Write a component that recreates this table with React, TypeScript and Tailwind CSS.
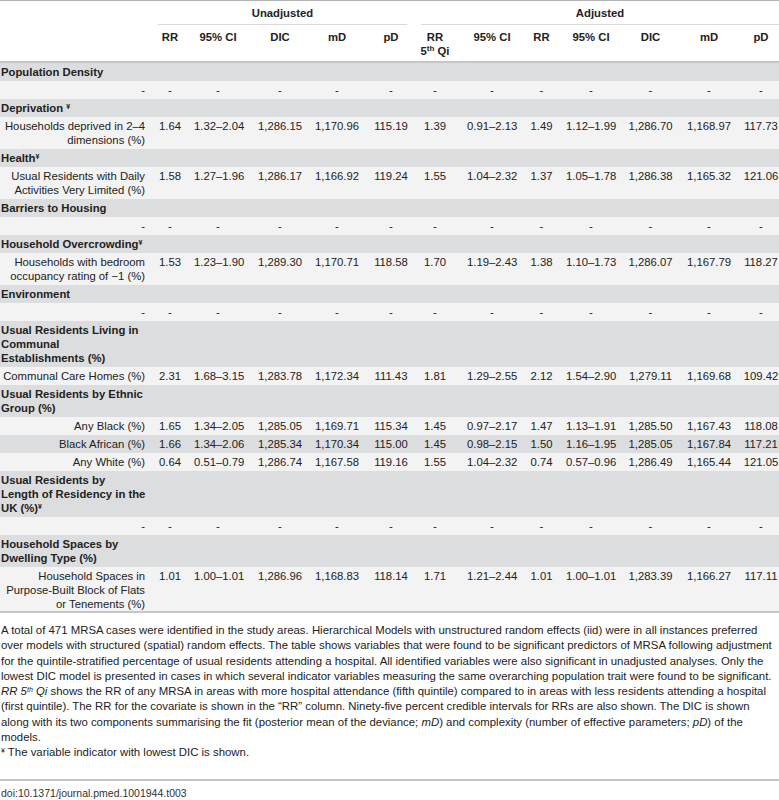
import React from 'react';

type Row =
  | { kind: 'group'; lines: React.ReactNode[] }
  | { kind: 'dash' }
  | { kind: 'data'; lines: string[]; values: string[] };

const rows: Row[] = [
  { kind: 'group', lines: ['Population Density'] },
  { kind: 'dash' },
  { kind: 'group', lines: [<>Deprivation <sup className="text-[7px]">¥</sup></>] },
  {
    kind: 'data',
    lines: ['Households deprived in 2–4', 'dimensions (%)'],
    values: ['1.64', '1.32–2.04', '1,286.15', '1,170.96', '115.19', '1.39', '0.91–2.13', '1.49', '1.12–1.99', '1,286.70', '1,168.97', '117.73'],
  },
  { kind: 'group', lines: [<>Health<sup className="text-[7px]">¥</sup></>] },
  {
    kind: 'data',
    lines: ['Usual Residents with Daily', 'Activities Very Limited (%)'],
    values: ['1.58', '1.27–1.96', '1,286.17', '1,166.92', '119.24', '1.55', '1.04–2.32', '1.37', '1.05–1.78', '1,286.38', '1,165.32', '121.06'],
  },
  { kind: 'group', lines: ['Barriers to Housing'] },
  { kind: 'dash' },
  { kind: 'group', lines: [<>Household Overcrowding<sup className="text-[7px]">¥</sup></>] },
  {
    kind: 'data',
    lines: ['Households with bedroom', 'occupancy rating of −1 (%)'],
    values: ['1.53', '1.23–1.90', '1,289.30', '1,170.71', '118.58', '1.70', '1.19–2.43', '1.38', '1.10–1.73', '1,286.07', '1,167.79', '118.27'],
  },
  { kind: 'group', lines: ['Environment'] },
  { kind: 'dash' },
  { kind: 'group', lines: ['Usual Residents Living in', 'Communal', 'Establishments (%)'] },
  {
    kind: 'data',
    lines: ['Communal Care Homes (%)'],
    values: ['2.31', '1.68–3.15', '1,283.78', '1,172.34', '111.43', '1.81', '1.29–2.55', '2.12', '1.54–2.90', '1,279.11', '1,169.68', '109.42'],
  },
  { kind: 'group', lines: ['Usual Residents by Ethnic', 'Group (%)'] },
  {
    kind: 'data',
    lines: ['Any Black (%)'],
    values: ['1.65', '1.34–2.05', '1,285.05', '1,169.71', '115.34', '1.45', '0.97–2.17', '1.47', '1.13–1.91', '1,285.50', '1,167.43', '118.08'],
  },
  {
    kind: 'data',
    lines: ['Black African (%)'],
    values: ['1.66', '1.34–2.06', '1,285.34', '1,170.34', '115.00', '1.45', '0.98–2.15', '1.50', '1.16–1.95', '1,285.05', '1,167.84', '117.21'],
  },
  {
    kind: 'data',
    lines: ['Any White (%)'],
    values: ['0.64', '0.51–0.79', '1,286.74', '1,167.58', '119.16', '1.55', '1.04–2.32', '0.74', '0.57–0.96', '1,286.49', '1,165.44', '121.05'],
  },
  { kind: 'group', lines: ['Usual Residents by', 'Length of Residency in the', <>UK (%)<sup className="text-[7px]">¥</sup></>] },
  { kind: 'dash' },
  { kind: 'group', lines: ['Household Spaces by', 'Dwelling Type (%)'] },
  {
    kind: 'data',
    lines: ['Household Spaces in', 'Purpose-Built Block of Flats', 'or Tenements (%)'],
    values: ['1.01', '1.00–1.01', '1,286.96', '1,168.83', '118.14', '1.71', '1.21–2.44', '1.01', '1.00–1.01', '1,283.39', '1,166.27', '117.11'],
  },
];

// nudges so each column's text sits where the original has it
const colCls = [
  'pr-[6px]', 'pr-[7px]', 'pl-[3px]', 'pl-[2px]', 'pl-[5px]',
  'pr-[6px]', 'pl-[4px]', '', 'pr-[5px]', '', 'pl-[3px]', 'pl-[8px]',
];

const heads: React.ReactNode[] = [
  'RR', '95% CI', 'DIC', 'mD', 'pD',
  <>RR<br />5<sup className="text-[8px]">th</sup> Qi</>,
  '95% CI', 'RR', '95% CI', 'DIC', 'mD', 'pD',
];

const grid = 'grid grid-cols-[152px_42px_55px_59px_56px_49px_50px_54px_49px_55px_59px_55px_44px]';

const App = () => {
  return (
    <div className="w-[779px] h-[800px] overflow-hidden bg-white text-[#222] font-['Liberation_Sans',Arial,sans-serif]">
      {/* Table */}
      <div className="border-t border-[#b4b4b4] text-[11.3px] leading-[14px]">
        <div className={grid}>
          <div />
          <div className="col-span-5 px-[6px]">
            <div className="border-b border-[#dadada] pt-[5px] pb-[4px] text-center font-bold">Unadjusted</div>
          </div>
          <div className="col-span-7 pl-[8px]">
            <div className="border-b border-[#dadada] pt-[5px] pb-[4px] text-center font-bold">Adjusted</div>
          </div>
        </div>
        <div className={`${grid} border-b-2 border-[#c6c6c6]`}>
          <div />
          {heads.map((h, i) => (
            <div key={i} className={`pt-[5px] pb-[3px] text-center font-bold whitespace-nowrap ${colCls[i]}`}>
              {h}
            </div>
          ))}
        </div>

        {rows.map((r, ri) => {
          const bg = ri % 2 === 0 ? 'bg-[#dcdddf]' : 'bg-[#f3f3f3]';
          if (r.kind === 'group') {
            return (
              <div key={ri} className={`${grid} ${bg}`}>
                <div className="col-span-13 pl-[1px] py-[2px] font-bold whitespace-nowrap">
                  {r.lines.map((l, li) => (
                    <div key={li}>{l}</div>
                  ))}
                </div>
              </div>
            );
          }
          const cells = r.kind === 'dash' ? Array(12).fill('-') : r.values;
          return (
            <div key={ri} className={`${grid} ${bg}`}>
              <div className="pr-[7px] py-[2px] text-right whitespace-nowrap">
                {r.kind === 'dash' ? '-' : r.lines.map((l, li) => <div key={li}>{l}</div>)}
              </div>
              {cells.map((v, i) => (
                <div key={i} className={`py-[2px] text-center whitespace-nowrap ${colCls[i]}`}>
                  {v}
                </div>
              ))}
            </div>
          );
        })}
      </div>

      {/* Notes */}
      <div className="border-t-2 border-[#c6c6c6] mt-[-2px]">
        <div className="pt-[10px] pb-[18px] pl-[1px] text-[11.4px] leading-[15.3px] whitespace-nowrap">
          <div>A total of 471 MRSA cases were identified in the study areas. Hierarchical Models with unstructured random effects (iid) were in all instances preferred</div>
          <div>over models with structured (spatial) random effects. The table shows variables that were found to be significant predictors of MRSA following adjustment</div>
          <div>for the quintile-stratified percentage of usual residents attending a hospital. All identified variables were also significant in unadjusted analyses. Only the</div>
          <div>lowest DIC model is presented in cases in which several indicator variables measuring the same overarching population trait were found to be significant.</div>
          <div>
            <i>RR 5<sup className="text-[7px]">th</sup> Qi</i> shows the RR of any MRSA in areas with more hospital attendance (fifth quintile) compared to in areas with less residents attending a hospital
          </div>
          <div>(first quintile). The RR for the covariate is shown in the “RR” column. Ninety-five percent credible intervals for RRs are also shown. The DIC is shown</div>
          <div>
            along with its two components summarising the fit (posterior mean of the deviance; <i>mD</i>) and complexity (number of effective parameters; <i>pD</i>) of the
          </div>
          <div>models.</div>
          <div>
            <sup className="text-[7px]">¥</sup> The variable indicator with lowest DIC is shown.
          </div>
        </div>
        <div className="border-t-2 border-[#c6c6c6] pt-[5px] pl-[1px] text-[10.5px] leading-[14px] text-[#333]">
          doi:10.1371/journal.pmed.1001944.t003
        </div>
      </div>
    </div>
  );
};

export default App;
